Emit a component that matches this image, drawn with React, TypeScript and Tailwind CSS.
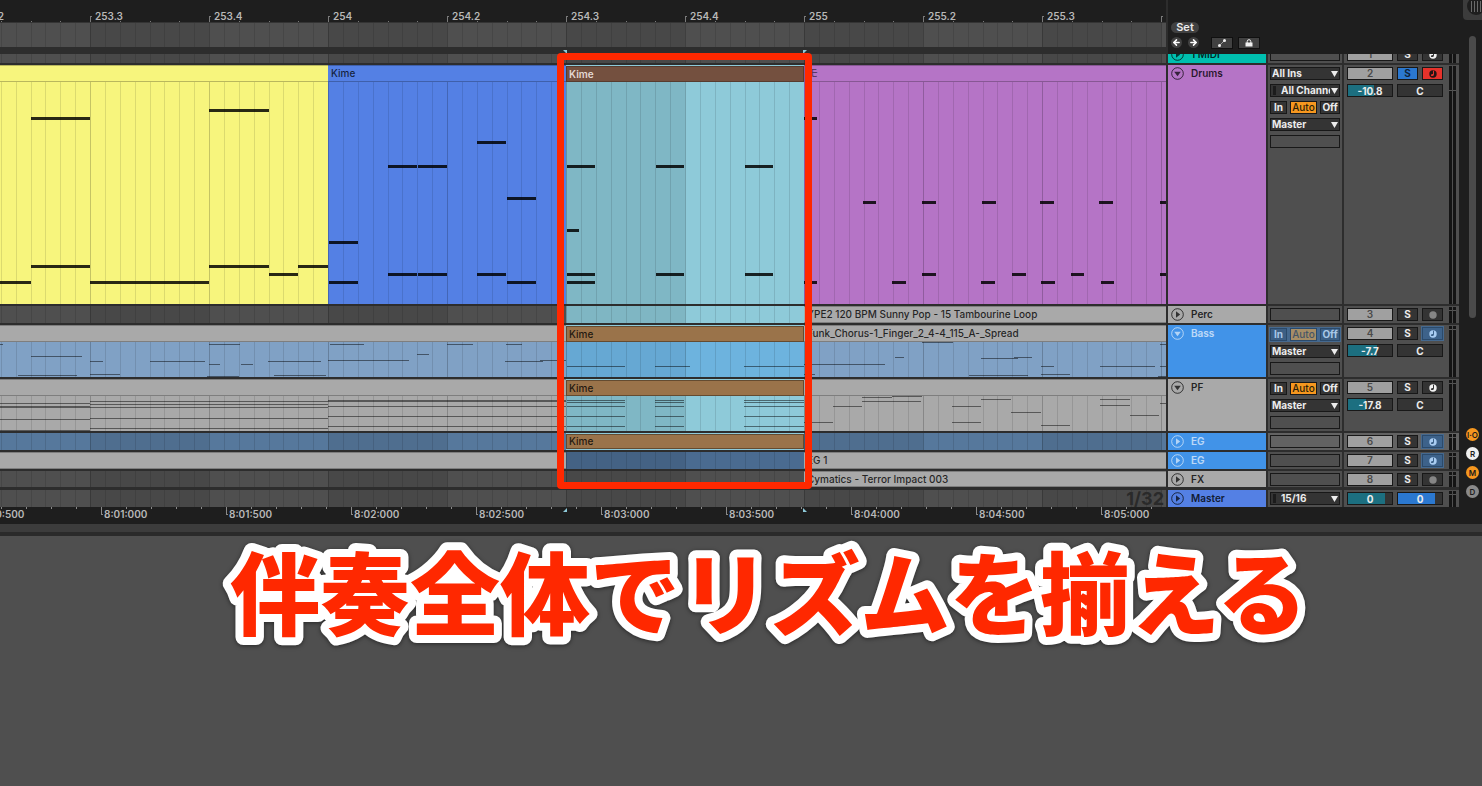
import React, { useState } from "react";
import clsx from "clsx";
import { ArrowLeft, ArrowRight } from "lucide-react";

type Note = [x: number, y: number, width: number];

const BEAT = 119;
const FIRST_BEAT = -29;

const beatLabels = ["253.2", "253.3", "253.4", "254", "254.2", "254.3", "254.4", "255", "255.2", "255.3", ""];
const timeLabels = ["8:00:500", "8:01:000", "8:01:500", "8:02:000", "8:02:500", "8:03:000", "8:03:500", "8:04:000", "8:04:500", "8:05:000"];

const drumNotes: Note[] = [
  [0, 199, 31], [31, 35, 59], [31, 183, 59], [90, 199, 119], [209, 27, 60], [209, 183, 60], [269, 191, 29], [298, 183, 30],
  [329, 159, 29], [329, 199, 29], [388, 83, 29], [418, 83, 29], [388, 191, 29], [418, 191, 29], [477, 59, 29], [477, 191, 29],
  [507, 115, 29], [507, 199, 29],
  [567, 83, 28], [567, 147, 12], [567, 191, 28], [567, 199, 28], [656, 83, 28], [656, 191, 28], [745, 83, 28], [745, 191, 28],
  [804, 35, 13], [804, 199, 13], [863, 119, 13], [892, 199, 14], [922, 119, 14], [922, 191, 14], [982, 119, 14], [981, 199, 14],
  [1012, 191, 14], [1040, 119, 14], [1041, 199, 14], [1071, 191, 13], [1099, 119, 14], [1101, 199, 13], [1160, 119, 9], [1160, 191, 9],
];

const bassNotes: Note[] = [
  [0, 2, 3], [31, 14, 51], [18, 33, 59], [90, 19, 13], [90, 32, 30], [150, 19, 55], [209, 2, 31], [209, 22, 11],
  [241, 22, 12], [207, 34, 32], [268, 19, 53], [274, 33, 52], [330, 2, 34], [328, 18, 81], [417, 12, 12], [447, 2, 26],
  [506, 2, 16], [505, 19, 38], [540, 18, 26], [567, 24, 58], [655, 24, 35], [744, 24, 60], [804, 22, 81], [804, 32, 11],
  [895, 15, 9], [922, 0, 31], [981, 16, 37], [1014, 15, 18], [969, 33, 59], [1041, 24, 13], [1041, 32, 29], [1100, 24, 55],
  [1160, 2, 9], [1160, 24, 9], [1158, 34, 10],
];

const chord = (x: number, width: number, rows: number[]): Note[] => rows.map((y) => [x, y, width]);

const pianoNotes: Note[] = [
  ...chord(0, 90, [7, 10, 11, 23, 34]),
  ...chord(90, 238, [5, 8, 11, 22, 32]),
  ...chord(328, 238, [4, 5, 10, 20, 30]),
  ...chord(567, 58, [4, 6, 10, 20, 30]),
  ...chord(655, 29, [4, 6, 10, 20, 30]),
  ...chord(744, 60, [4, 6, 10, 20, 30]),
  [804, 26, 29], [833, 10, 29], [862, 1, 30], [862, 5, 59], [892, 0, 30], [952, 10, 29], [952, 26, 29], [981, 3, 30],
  [1011, 16, 30], [1041, 29, 29], [1100, 3, 30], [1100, 9, 30], [1130, 19, 29], [1160, 7, 9],
];

function Grid({ shade = false }: { shade?: boolean }) {
  const beats = Array.from({ length: 22 }, (_, i) => FIRST_BEAT + i * BEAT);
  return (
    <svg className="pointer-events-none absolute inset-0 h-full w-full" aria-hidden="true">
      {beats.map((x, i) => (
        <g key={x}>
          {shade && i % 2 === 1 && <rect x={x} y="0" width={BEAT} height="100%" fill="#000" fillOpacity="0.08" />}
          {Array.from({ length: 8 }, (_, n) => (
            <rect
              key={n}
              x={x + Math.round((n * BEAT) / 8)}
              y="0"
              width="1"
              height="100%"
              fill="#000"
              fillOpacity={n === 0 ? 0.2 : 0.11}
            />
          ))}
        </g>
      ))}
    </svg>
  );
}

function Notes({ notes, thick = false }: { notes: Note[]; thick?: boolean }) {
  return (
    <svg className="pointer-events-none absolute inset-0 h-full w-full" aria-hidden="true">
      {notes.map(([x, y, width], i) => (
        <rect key={i} x={x} y={y} width={width} height={thick ? 3 : 1} fill="#000" fillOpacity={thick ? 0.84 : 0.48} />
      ))}
    </svg>
  );
}

// Clips share the same columns in every lane: before, drop, selection, after
function Lane({ className, children }: { className?: string; children?: React.ReactNode }) {
  return <div className={clsx("relative flex min-w-0 flex-1 overflow-hidden", className)}>{children}</div>;
}

function Clip({ className, children }: { className?: string; children?: React.ReactNode }) {
  return (
    <div className={clsx("flex shrink-0 items-center overflow-hidden border-y border-black/25 pl-[3px] whitespace-nowrap", className)}>
      {children}
    </div>
  );
}

function Kime({ className }: { className?: string }) {
  return (
    <div className={clsx("flex w-[238px] shrink-0 border-t border-[#8ecad9]", className)}>
      <div className="flex flex-1 items-center border border-black/35 bg-[#9a734a] pl-[2px] text-black/80">Kime</div>
    </div>
  );
}

function FoldButton({ open = false, name, light = false }: { open?: boolean; name: string; light?: boolean }) {
  return (
    <button type="button" aria-label={`Fold ${name}`} aria-expanded={open} className={clsx("size-[13px] shrink-0", light ? "text-white/60" : "text-black/70")}>
      <svg viewBox="0 0 13 13" className="size-[13px]" fill="none">
        <circle cx="6.5" cy="6.5" r="5.8" stroke="currentColor" />
        <path d={open ? "M3.2 4.800h6.600l-3.300 4.400z" : "M5 3.200v6.600l4.200-3.300z"} fill="currentColor" />
      </svg>
    </button>
  );
}

function Head({ name, open, light, className }: { name: string; open?: boolean; light?: boolean; className: string }) {
  return (
    <div className={clsx("flex w-[98px] shrink-0 items-start pt-[2px] pl-[3px]", className)}>
      <FoldButton name={name} open={open} light={light} />
      <span className={clsx("pl-[7px] font-semibold", light ? "text-white/65" : "text-black/80")}>{name}</span>
    </div>
  );
}

function Picker({ label, options, marker = false }: { label: string; options: string[]; marker?: boolean }) {
  return (
    <label className="relative flex h-[13px] w-full">
      <span className="sr-only">{label}</span>
      <select
        className={clsx(
          "h-full w-full appearance-none border border-[#181818] bg-[#343434] pr-[9px] text-[10px] leading-[11px] font-bold text-[#ececec]",
          marker ? "pl-[10px]" : "pl-px"
        )}
      >
        {options.map((option) => (
          <option key={option}>{option}</option>
        ))}
      </select>
      {marker && <span className="absolute top-[2px] left-[3px] h-[9px] w-[3px] bg-[#1c1c1c]" />}
      <svg viewBox="0 0 7 6" className="pointer-events-none absolute top-[4px] right-[2px] h-[6px] w-[7px]" aria-hidden="true">
        <path d="M0 0h7L3.5 6z" fill="#ececec" />
      </svg>
    </label>
  );
}

function Slot() {
  return <div className="h-[13px] w-full border border-[#181818]" />;
}

const monitorModes = ["In", "Auto", "Off"];

function Monitor({ frozen = false }: { frozen?: boolean }) {
  const [mode, setMode] = useState("Auto");
  return (
    <div className={clsx("flex h-[13px] w-full justify-between", frozen && "bg-[#45698f] outline outline-[#45698f]")}>
      {monitorModes.map((m) => (
        <button
          key={m}
          type="button"
          disabled={frozen}
          onClick={() => setMode(m)}
          className={clsx(
            "border text-center leading-[11px] whitespace-nowrap",
            m === "In" && "w-[17px]",
            m === "Auto" && "w-[27px]",
            m === "Off" && "w-[20px]",
            frozen ? "border-[#2b4a6b]" : "border-[#181818]",
            mode === m && !frozen && "bg-[#f6971f] font-medium text-[#2c1f08]",
            mode === m && frozen && "bg-[#a78e66] font-medium text-[#465566]",
            mode !== m && !frozen && "bg-[#343434] font-bold text-[#ececec]",
            mode !== m && frozen && "bg-[#3c5f85] font-bold text-[#a9c8e8]"
          )}
        >
          <span className="-mx-1">{m}</span>
        </button>
      ))}
    </div>
  );
}

function Io({ className = "bg-[#4f4f4f] pt-[2px]", children }: { className?: string; children: React.ReactNode }) {
  return <div className={clsx("flex w-[74px] shrink-0 flex-col gap-1 px-[2px]", className)}>{children}</div>;
}

type ArmKind = "on" | "off" | "audio" | "frozen";

function ArmButton({ kind, track }: { kind: ArmKind; track: string }) {
  const dot = { on: "#231414", off: "#f2f2f2", audio: "#868686", frozen: "#a9cdf2" }[kind];
  const cut = { on: "#e5322b", off: "#343434", audio: "", frozen: "#3d628a" }[kind];
  return (
    <button
      type="button"
      aria-label={`Arm track ${track}`}
      className={clsx(
        "flex h-[13px] w-[21px] items-center justify-center border",
        kind === "on" && "border-[#181818] bg-[#e5322b]",
        (kind === "off" || kind === "audio") && "border-[#181818] bg-[#343434]",
        kind === "frozen" && "border-[#2b4a6b] bg-[#3d628a] outline outline-[#45698f]"
      )}
    >
      <svg viewBox="0 0 8 8" className="size-2">
        <circle cx="4" cy="4" r="3.7" fill={dot} />
        {cut && <path d="M4 .8h1v3.400c0 1.200-.9 1.900-1.900 1.900S1.700 5.400 2 4.800s1-.9 2-.8z" fill={cut} />}
      </svg>
    </button>
  );
}

function Field({ label, value, fill, color }: { label: string; value: string; fill: number; color: string }) {
  return (
    <input
      aria-label={label}
      defaultValue={value}
      className="h-[13px] w-[46px] border border-[#181818] text-center text-[10px] leading-[11px] font-bold text-[#ececec]"
      style={{ background: `linear-gradient(to right, ${color} ${fill}%, #343434 ${fill}%)` }}
    />
  );
}

function Meter({ split = false }: { split?: boolean }) {
  return (
    <div className="ml-auto flex gap-px self-stretch pt-px pr-[3px]" aria-hidden="true">
      {[0, 1].map((i) => (
        <div key={i} className="w-[3px] bg-[#141414]">
          <div className={clsx("h-px bg-[#555]", split ? "mt-6" : "mt-[3px]")} />
        </div>
      ))}
    </div>
  );
}

interface MixerProps {
  track: string;
  arm: ArmKind;
  solo?: boolean;
  volume?: string;
  fill?: number;
  className?: string;
}

function Mixer({ track, arm, solo = false, volume, fill = 0, className = "bg-[#4f4f4f]" }: MixerProps) {
  const [active, setActive] = useState(true);
  const [soloed, setSoloed] = useState(solo);
  return (
    <div className={clsx("flex w-[115px] shrink-0", className)}>
      <div className="flex flex-col gap-1 pt-[2px] pl-[3px]">
        <div className="flex gap-1">
          <button
            type="button"
            onClick={() => setActive(!active)}
            className={clsx("h-[13px] w-[46px] border border-[#181818] leading-[11px] font-semibold text-[#4a4a4a]", active ? "bg-[#a0a0a0]" : "bg-[#343434]")}
          >
            {track}
          </button>
          <button
            type="button"
            onClick={() => setSoloed(!soloed)}
            className={clsx("h-[13px] w-[21px] border border-[#181818] leading-[11px] font-bold", soloed ? "bg-[#2b78d0] text-[#10233a]" : "bg-[#343434] text-[#ececec]")}
          >
            S
          </button>
          <ArmButton kind={arm} track={track} />
        </div>
        {volume && (
          <div className="flex gap-1">
            <Field label={`Volume ${track}`} value={volume} fill={fill} color="#1c6f80" />
            <Field label={`Pan ${track}`} value="C" fill={0} color="#343434" />
          </div>
        )}
      </div>
      <Meter split={track === "2"} />
    </div>
  );
}

function Row({ className, children }: { className: string; children: React.ReactNode }) {
  return <div className={clsx("flex gap-[2px]", className)}>{children}</div>;
}

function BeatRuler() {
  return (
    <div className="relative h-[23px] overflow-hidden border-b border-[#343434] bg-[#1e1e1e]">
      <svg className="absolute inset-0 h-full w-full" aria-hidden="true">
        {beatLabels.map((_, i) => {
          const x = FIRST_BEAT + i * BEAT;
          return (
            <g key={x} fill="#7a7a7a">
              <path d={`M${x} 16h2v1h-1v5h-1z`} />
              {[30, 60, 89].map((dx) => (
                <rect key={dx} x={x + dx} y="21" width="1" height="1" />
              ))}
            </g>
          );
        })}
      </svg>
      <div className="-ml-[29px] flex pt-[10px]">
        {beatLabels.map((label, i) => (
          <span key={i} className="w-[119px] shrink-0 pl-[5px] font-semibold text-[#b8b8b8]">
            {label}
          </span>
        ))}
      </div>
    </div>
  );
}

function TimeRuler() {
  return (
    <div className="relative h-[17px] flex-1 overflow-hidden">
      <svg className="absolute inset-0 h-full w-full" aria-hidden="true">
        {timeLabels.map((label, i) => {
          const x = i * 125 - 24;
          return (
            <g key={label} fill="#8a8a8a">
              <path d={`M${x} 0h1v7h1v1h-2z`} />
              {[25, 50, 75, 100].map((dx) => (
                <rect key={dx} x={x + dx} y="0" width="1" height="2" />
              ))}
            </g>
          );
        })}
        <path d="M567 1v4h-4zM803 1v4h4z" fill="#8ecad9" />
      </svg>
      <div className="-ml-[24px] flex pt-px">
        {timeLabels.map((label) => (
          <span key={label} className="w-[125px] shrink-0 pl-[3px] font-semibold text-[#b8b8b8]">
            {label}
          </span>
        ))}
      </div>
    </div>
  );
}

const sections = [
  { label: "I·O", title: "Show I-O", color: "bg-[#f6971f]" },
  { label: "R", title: "Show returns", color: "bg-[#f0f0f0]" },
  { label: "M", title: "Show mixer", color: "bg-[#f6971f]" },
  { label: "D", title: "Show delays", color: "bg-[#8a8a8a]" },
];

function Gutter() {
  return (
    <div className="flex w-[23px] shrink-0 flex-col items-center bg-[#1e1e1e] pl-1">
      <div className="flex h-5 w-full justify-end overflow-hidden rounded-bl bg-[#3c3c3c]">
        <svg viewBox="0 0 15 20" className="h-5 w-[15px]" aria-hidden="true">
          <circle cx="9" cy="6" r="9" fill="#1e1e1e" />
          <path d="M4.500 1v11M7.500 1v11M10.500 1v11M13.500 1v11" stroke="#6a6a6a" />
        </svg>
      </div>
      <div className="mt-4 h-[282px] w-[7px] rounded-full bg-[#4b4b4b]" />
      <div className="mt-[110px] flex flex-col gap-[6px]">
        {sections.map((s) => (
          <button
            key={s.label}
            type="button"
            title={s.title}
            className={clsx("flex size-[13px] items-center justify-center rounded-full text-[8px] leading-none font-semibold text-[#1c1c1c]", s.color)}
          >
            {s.label}
          </button>
        ))}
      </div>
    </div>
  );
}

function SetControls() {
  return (
    <div className="flex w-[291px] shrink-0 flex-col gap-1 bg-[#1e1e1e] pt-[22px] pl-[3px]">
      <button type="button" className="h-[11px] w-7 rounded-full bg-[#414141] text-[11px] leading-[11px] font-semibold text-[#ececec]">
        Set
      </button>
      <div className="flex h-[11px] items-center">
        <button type="button" aria-label="Previous locator" className="flex size-[11px] items-center justify-center rounded-full bg-[#414141] text-white">
          <ArrowLeft size={9} strokeWidth={4} />
        </button>
        <button type="button" aria-label="Next locator" className="ml-[6px] flex size-[11px] items-center justify-center rounded-full bg-[#414141] text-white">
          <ArrowRight size={9} strokeWidth={4} />
        </button>
        <button type="button" aria-label="Automation mode" className="ml-3 flex h-3 w-[22px] items-center justify-center border border-[#101010] bg-[#414141]">
          <svg viewBox="0 0 8 8" className="size-2">
            <path d="M1.500 6.500l5-5" stroke="#f0f0f0" strokeDasharray="1 .6" />
            <circle cx="1.500" cy="6.500" r="1.500" fill="#f0f0f0" />
            <circle cx="6.500" cy="1.500" r="1.500" fill="#f0f0f0" />
          </svg>
        </button>
        <button type="button" aria-label="Lock envelopes" className="ml-[5px] flex h-3 w-[22px] items-center justify-center border border-[#101010] bg-[#414141]">
          <svg viewBox="0 0 8 8" className="size-2">
            <rect x="0.500" y="3.500" width="7" height="4" fill="#f0f0f0" />
            <path d="M2.200 4V2.500a1.800 1.800 0 013.600 0V4" stroke="#f0f0f0" fill="none" />
          </svg>
        </button>
      </div>
    </div>
  );
}

export default function App() {
  return (
    <div className="flex min-h-screen flex-col overflow-hidden bg-[#4f4f4f] font-['Inter',sans-serif] text-[10px] leading-[13px] font-medium">
      <main className="relative flex">
        <div className="min-w-0 flex-1 bg-[#2d2d2d]">
          <div className="flex gap-[2px]">
            <div className="min-w-0 flex-1">
              <BeatRuler />
              <div className="relative h-6 bg-[#4f4f4f]">
                <Grid shade />
              </div>
              <svg className="block h-[7px] w-full" aria-hidden="true">
                <path d="M563 3h4v4zM807 3h-4v4z" fill="#8ecad9" />
              </svg>
            </div>
            <SetControls />
          </div>

          {/* scrolled so that only the foot of the first track shows */}
          <div className="flex h-[9px] items-end overflow-hidden">
            <Row className="h-[17px] flex-1">
              <Lane className="bg-[#4f4f4f]">
                <Grid shade />
              </Lane>
              <Head name="1 MIDI" className="bg-[#00bfaf]" />
              <Io>
                <Slot />
              </Io>
              <Mixer track="1" arm="off" />
            </Row>
          </div>

          <div className="flex flex-col gap-[2px] pt-[2px]">
            <Row className="h-[239px]">
              <div className="flex min-w-0 flex-1 flex-col overflow-hidden">
                <div className="flex h-[17px]">
                  <Clip className="w-[328px] bg-[#f7f57d]" />
                  <Clip className="w-[238px] bg-[#5480e4] text-black/75">Kime</Clip>
                  <div className="flex w-[238px] shrink-0 border-t border-[#8ecad9]">
                    <div className="flex flex-1 items-center border border-black/25 bg-[#74503f] pl-[2px] font-semibold text-[#e3d8d3]">Kime</div>
                  </div>
                  <Clip className="flex-1 border-l bg-[#b574c6] font-['Inter','Noto_Sans_CJK_JP',sans-serif] text-black/50">モ</Clip>
                </div>
                <Lane>
                  <div className="w-[328px] shrink-0 bg-[#f7f57d]" />
                  <div className="w-[238px] shrink-0 bg-[#5480e4]" />
                  <div className="w-[119px] shrink-0 bg-[#7fb7c5]" />
                  <div className="w-[119px] shrink-0 bg-[#8ecad9]" />
                  <div className="flex-1 bg-[#b574c6]" />
                  <Grid />
                  <Notes notes={drumNotes} thick />
                </Lane>
              </div>
              <Head name="Drums" open className="bg-[#b574c6]" />
              <Io>
                <Picker label="Input type" options={["All Ins", "Computer Keyboard", "No Input"]} />
                <Picker label="Input channel" options={["All Channels", "Ch. 1", "Ch. 2"]} marker />
                <Monitor />
                <Picker label="Output" options={["Master", "Sends Only"]} />
                <Slot />
              </Io>
              <Mixer track="2" arm="on" solo volume="-10.8" fill={60} />
            </Row>

            <Row className="h-[17px]">
              <Lane className="bg-[#4f4f4f]">
                <div className="w-[566px] shrink-0" />
                <div className="w-[119px] shrink-0 bg-[#8ac6d4]" />
                <div className="w-[119px] shrink-0 bg-[#8ecad9]" />
                <Grid shade />
                <Clip className="relative flex-1 bg-[#a9a9a9] text-black/80">YPE2 120 BPM Sunny Pop - 15 Tambourine Loop</Clip>
              </Lane>
              <Head name="Perc" className="bg-[#a9a9a9]" />
              <Io>
                <Slot />
              </Io>
              <Mixer track="3" arm="audio" />
            </Row>

            <Row className="h-[52px]">
              <div className="flex min-w-0 flex-1 flex-col overflow-hidden">
                <div className="flex h-[17px]">
                  <Clip className="w-[566px] bg-[#a9a9a9]" />
                  <Kime />
                  <Clip className="flex-1 bg-[#a9a9a9] text-black/80">Funk_Chorus-1_Finger_2_4-4_115_A-_Spread</Clip>
                </div>
                <Lane className="bg-[#80a1c5]">
                  <div className="w-[566px] shrink-0" />
                  <div className="w-[119px] shrink-0 bg-[#66a8d3]" />
                  <div className="w-[119px] shrink-0 bg-[#6db3de]" />
                  <Grid />
                  <Notes notes={bassNotes} />
                </Lane>
              </div>
              <Head name="Bass" open light className="bg-[#4193e8]" />
              <Io className="bg-[#4f4f4f] pt-[3px]">
                <Monitor frozen />
                <Picker label="Output" options={["Master", "Sends Only"]} />
                <Slot />
              </Io>
              <Mixer track="4" arm="frozen" volume="-7.7" fill={66} />
            </Row>

            <Row className="h-[52px]">
              <div className="flex min-w-0 flex-1 flex-col overflow-hidden">
                <div className="flex h-[17px]">
                  <Clip className="w-[566px] bg-[#a9a9a9]" />
                  <Kime />
                  <Clip className="flex-1 bg-[#a9a9a9]" />
                </div>
                <Lane className="bg-[#a9a9a9]">
                  <div className="w-[566px] shrink-0" />
                  <div className="w-[119px] shrink-0 bg-[#7fb7c5]" />
                  <div className="w-[119px] shrink-0 bg-[#8ecad9]" />
                  <Grid />
                  <Notes notes={pianoNotes} />
                </Lane>
              </div>
              <Head name="PF" open className="bg-[#a9a9a9]" />
              <Io className="bg-[#4f4f4f] pt-[3px]">
                <Monitor />
                <Picker label="Output" options={["Master", "Sends Only"]} />
                <Slot />
              </Io>
              <Mixer track="5" arm="off" volume="-17.8" fill={40} />
            </Row>

            <Row className="h-[17px]">
              <Lane className="bg-[#56789c]">
                <Grid shade />
                <div className="w-[566px] shrink-0" />
                <Kime className="relative border-b" />
              </Lane>
              <Head name="EG" light className="bg-[#4193e8]" />
              <Io className="bg-[#626262] pt-[2px]">
                <Slot />
              </Io>
              <Mixer track="6" arm="frozen" className="bg-[#626262]" />
            </Row>

            <Row className="h-[17px]">
              <Lane className="bg-[#4a6b90]">
                <Grid shade />
                <Clip className="relative w-[566px] bg-[#a9a9a9]" />
                <div className="w-[238px] shrink-0" />
                <Clip className="relative flex-1 bg-[#a9a9a9] text-black/80">EG 1</Clip>
              </Lane>
              <Head name="EG" light className="bg-[#4193e8]" />
              <Io>
                <Slot />
              </Io>
              <Mixer track="7" arm="frozen" />
            </Row>

            <Row className="h-4">
              <Lane className="bg-[#4f4f4f]">
                <Grid shade />
                <div className="w-[804px] shrink-0" />
                <Clip className="relative flex-1 bg-[#a9a9a9] text-black/80">Cymatics - Terror Impact 003</Clip>
              </Lane>
              <Head name="FX" className="bg-[#a9a9a9]" />
              <Io>
                <Slot />
              </Io>
              <Mixer track="8" arm="audio" />
            </Row>
          </div>

          <Row className="mt-[3px] h-[17px]">
            <Lane className="items-center justify-end bg-[#4f4f4f] pr-[2px]">
              <Grid shade />
              <span className="relative text-[18px] leading-[17px] font-bold text-[#2a2a2a]">1/32</span>
            </Lane>
            <Head name="Master" className="bg-[#5480e4]" />
            <Io>
              <Picker label="Cue output" options={["15/16", "1/2"]} marker />
            </Io>
            <div className="flex w-[115px] shrink-0 bg-[#4f4f4f]">
              <div className="flex gap-1 pt-[2px] pl-[3px]">
                <Field label="Master volume" value="0" fill={83} color="#1c6f80" />
                <Field label="Cue volume" value="0" fill={83} color="#2b78d0" />
              </div>
              <Meter />
            </div>
          </Row>

          <div className="flex bg-[#1e1e1e]">
            <TimeRuler />
            <div className="w-[293px] shrink-0" />
          </div>
        </div>

        <Gutter />

        {/* red frame round the section that plays in unison */}
        <div className="pointer-events-none absolute top-[53px] left-[557px] h-[436px] w-[255px] rounded border-[7px] border-[#ff2800]" />
      </main>

      <div className="h-2 bg-[#3c3c3c]" />
      <div className="h-1 bg-[#2a2a2a]" />

      <svg className="block h-[120px] w-full drop-shadow-[0_1px_2px_rgba(0,0,0,0.5)]" role="img" aria-label="伴奏全体でリズムを揃える">
        <text
          x="230"
          y="92"
          className="font-['Noto_Sans_CJK_JP',sans-serif] text-[90px] font-black"
          fill="#ff2800"
          stroke="#fff"
          strokeWidth="16"
          strokeLinejoin="round"
          paintOrder="stroke"
        >
          伴奏全体でリズムを揃える
        </text>
      </svg>
    </div>
  );
}
